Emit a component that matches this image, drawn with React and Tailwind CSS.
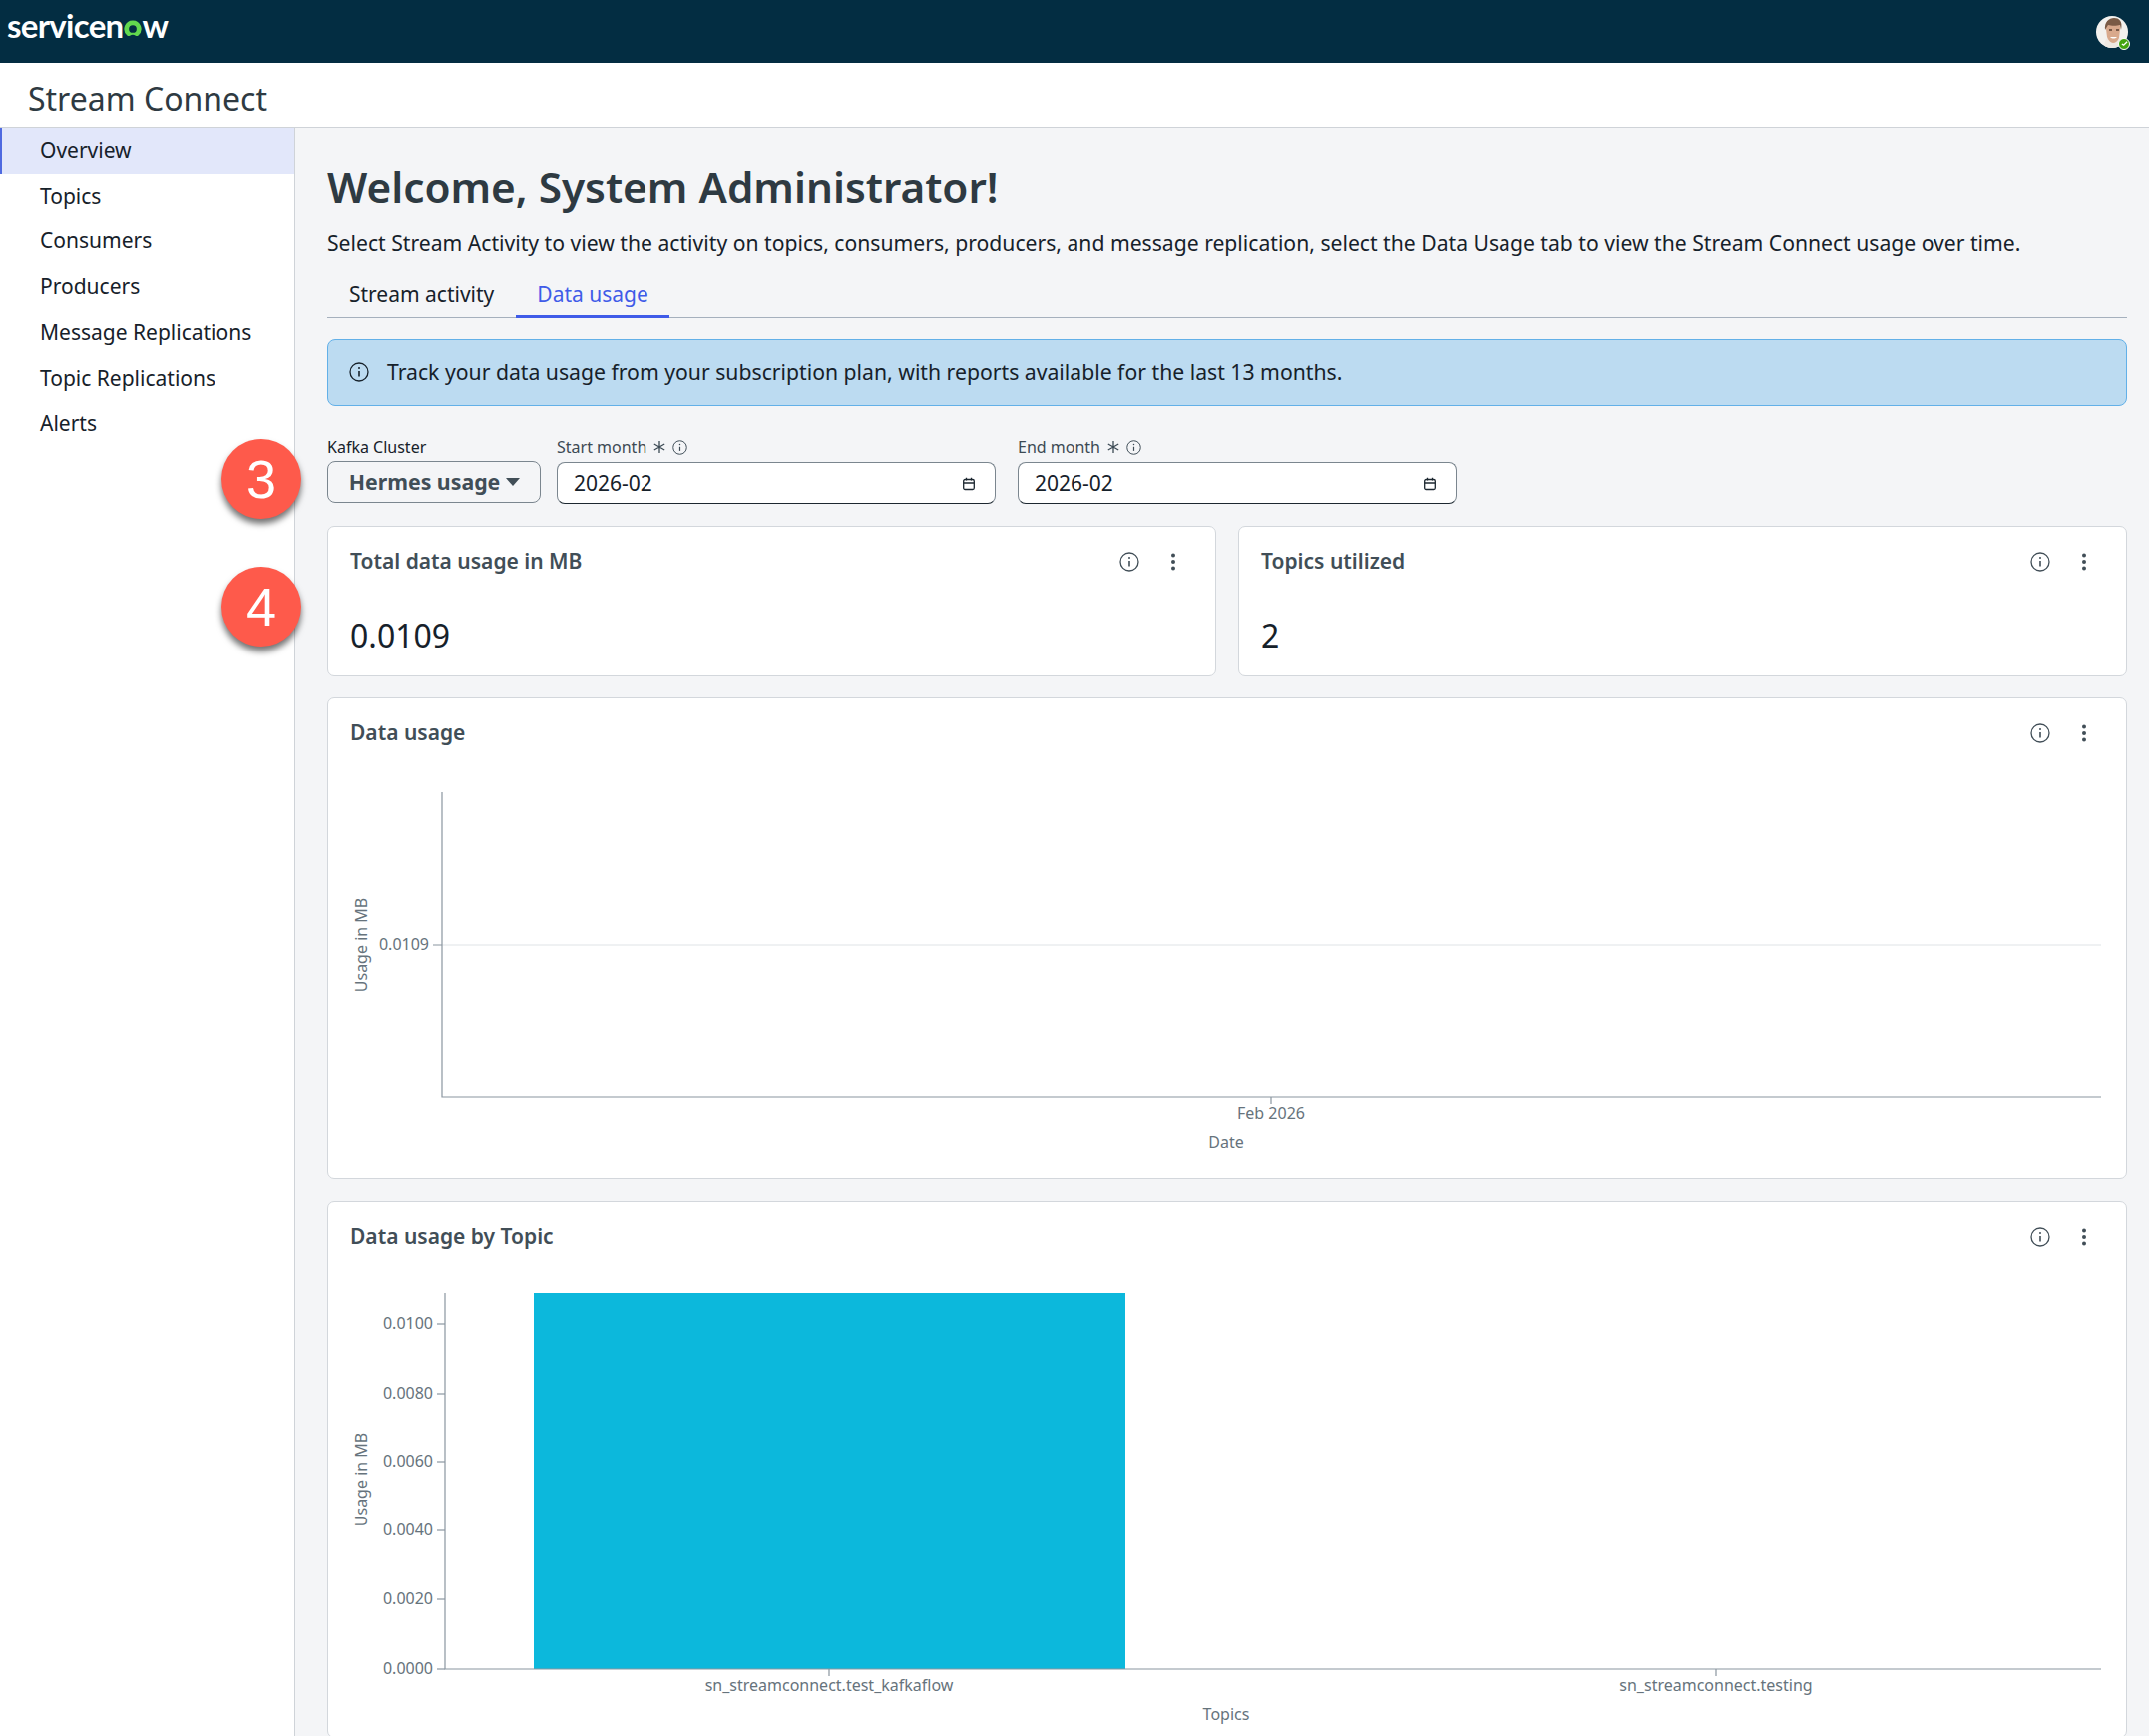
import React from "react";

const NAV_ITEMS = ["Overview", "Topics", "Consumers", "Producers", "Message Replications", "Topic Replications", "Alerts"];
const TOPIC_TICKS = [
  ["0.0100", 41],
  ["0.0080", 111],
  ["0.0060", 179],
  ["0.0040", 248],
  ["0.0020", 317],
  ["0.0000", 387],
];

function InfoIcon({ className = "w-[20px] h-[20px]" }) {
  return (
    <svg viewBox="0 0 20 20" fill="none" stroke="currentColor" className={className}>
      <circle cx="10" cy="10" r="9" strokeWidth="1.3" />
      <path d="M10 9v5.5" strokeWidth="1.6" />
      <circle cx="10" cy="6" r="1" fill="currentColor" stroke="none" />
    </svg>
  );
}

function DotsIcon() {
  return (
    <svg viewBox="0 0 6 18" fill="currentColor" className="w-[6px] h-[18px]">
      <circle cx="3" cy="2.5" r="2" />
      <circle cx="3" cy="9" r="2" />
      <circle cx="3" cy="15.5" r="2" />
    </svg>
  );
}

function RequiredIcon() {
  return (
    <svg viewBox="0 0 14 14" fill="none" stroke="currentColor" strokeWidth="1.3" className="w-[14px] h-[14px]">
      <path d="M7 1v12M1.8 4l10.4 6M1.8 10l10.4-6" />
    </svg>
  );
}

function CalendarIcon() {
  return (
    <svg viewBox="0 0 14 14" fill="none" stroke="currentColor" strokeWidth="1.3" className="w-[14px] h-[14px] text-[#1c2730]">
      <rect x="1.7" y="2.5" width="10.6" height="10" rx="1.5" />
      <path d="M1.7 6h10.6M4.5 .8v2.6M9.5 .8v2.6" />
    </svg>
  );
}

function Avatar() {
  return (
    <div className="relative w-[32px] h-[32px]">
      <svg viewBox="0 0 32 32" className="w-[32px] h-[32px] rounded-full">
        <rect width="32" height="32" fill="#f3f1ee" />
        <path d="M8 32c0-9 4-12 9-12s10 3 10 12z" fill="#efe9e3" />
        <path d="M10 13c0-6 4-8 8-8s7 3 6 9l-1 8c-1 3-4 5-6 5s-5-3-6-6z" fill="#d9a98c" />
        <path d="M9 14C8 6 13 2 18 2s9 3 7 12l-1-5c-3 1-9 1-12 0z" fill="#7a5a45" />
        <path d="M13 14h3M20 14h3" stroke="#5a3f30" strokeWidth="1.3" />
        <path d="M14 21c2 2 5 2 7 0z" fill="#fff" />
      </svg>
      <span className="absolute right-[-2px] bottom-[-2px] w-[12px] h-[12px] rounded-full bg-[#43a410] border border-white flex items-center justify-center">
        <svg viewBox="0 0 8 8" fill="none" stroke="#fff" strokeWidth="1.5" className="w-[7px] h-[7px]">
          <path d="M1 4.5l2 1.5 4-4" />
        </svg>
      </span>
    </div>
  );
}

function Logo() {
  return (
    <div className="flex items-baseline text-white font-['Lato',sans-serif] font-bold text-[33px] leading-none tracking-[-0.7px] ml-[7px] mb-[12px]">
      <span>servicen</span>
      <svg viewBox="0 0 20 20" className="w-[18px] h-[18px] mx-[0.5px]">
        <path d="M10 .5a9.500 9.500 0 0 0-6.200 16.700c1 .8 2.100.8 3 .2a5.600 5.600 0 0 1 6.400 0c.9.6 2 .6 3-.2A9.500 9.500 0 0 0 10 .5zm0 13.800a4.300 4.300 0 1 1 0-8.600 4.300 4.300 0 0 1 0 8.600z" fill="#62d84e" />
      </svg>
      <span>w</span>
    </div>
  );
}

function Badge({ value, className }) {
  return (
    <div className={`absolute left-[222px] w-[80px] h-[80px] pt-[1px] rounded-full bg-[#fe5a4b] text-white flex items-center justify-center font-['Liberation_Sans',sans-serif] text-[54px] shadow-[0_5px_6px_rgba(0,0,0,0.55)] ${className}`}>
      {value}
    </div>
  );
}

function CardHeader({ title }) {
  return (
    <div className="flex items-center justify-between h-[70px] pl-[22px] pr-[39px] text-[#414e57]">
      <h2 className="text-[21px] font-semibold">{title}</h2>
      <div className="flex items-center gap-[31px]">
        <InfoIcon />
        <DotsIcon />
      </div>
    </div>
  );
}

function StatCard({ title, value }) {
  return (
    <div className="flex-1 h-[151px] bg-white border border-[#d3d7dc] rounded-[7px]">
      <CardHeader title={title} />
      <div className="pl-[22px] mt-[17px] text-[32px] leading-[44px] text-[#16212a]">{value}</div>
    </div>
  );
}

function DateField({ label, className }) {
  return (
    <div className={className}>
      <div className="flex items-center gap-[6px] h-[20px] mb-[5px] text-[16px] text-[#3c4a54]">
        <span>{label}</span>
        <RequiredIcon />
        <InfoIcon className="w-[15px] h-[15px]" />
      </div>
      <div className="flex items-center justify-between h-[42px] pl-[16px] pr-[19px] pt-[1px] bg-white rounded-[8px] border border-[#7b868f] border-b-[#1c2730] text-[21px] text-[#16212a]">
        <span>2026-02</span>
        <CalendarIcon />
      </div>
    </div>
  );
}

function UsageChart() {
  return (
    <svg viewBox="0 0 1802 399" className="block w-full h-[399px] text-[16px] font-['Noto_Sans',sans-serif] fill-[#66737c]">
      <path d="M114 166H1777" stroke="#dfe3e6" fill="none" />
      <path d="M114 13V319H1777M105 166H114M945 319V326" stroke="#8a96a0" strokeWidth="1.200" fill="none" />
      <text x="101" y="171" textAnchor="end">0.0109</text>
      <text x="945" y="341" textAnchor="middle">Feb 2026</text>
      <text x="900" y="370" textAnchor="middle">Date</text>
      <text x="39" y="166" textAnchor="middle" transform="rotate(-90 39 166)">Usage in MB</text>
    </svg>
  );
}

function TopicChart() {
  return (
    <svg viewBox="0 0 1802 455" className="block w-full h-[455px] text-[16px] font-['Noto_Sans',sans-serif] fill-[#66737c]">
      <rect x="206" y="10" width="593" height="377" fill="#0cb8dc" />
      <path d="M117 10V387H1777M502 387V394M1391 387V394" stroke="#8a96a0" strokeWidth="1.200" fill="none" />
      {TOPIC_TICKS.map(([label, y]) => (
        <g key={label}>
          <path d={`M109 ${y}H117`} stroke="#8a96a0" strokeWidth="1.200" fill="none" />
          <text x="105" y={y + 5} textAnchor="end">{label}</text>
        </g>
      ))}
      <text x="502" y="409" textAnchor="middle">sn_streamconnect.test_kafkaflow</text>
      <text x="1391" y="409" textAnchor="middle">sn_streamconnect.testing</text>
      <text x="900" y="438" textAnchor="middle">Topics</text>
      <text x="39" y="197" textAnchor="middle" transform="rotate(-90 39 197)">Usage in MB</text>
    </svg>
  );
}

export default function App() {
  return (
    <div className="relative h-[1740px] overflow-hidden bg-white font-['Noto_Sans',sans-serif] text-[#16212a]">
      <header className="flex items-center justify-between h-[63px] pr-[21px] bg-[#032d42]">
        <Logo />
        <Avatar />
      </header>

      <div className="flex items-center h-[65px] pl-[28px] pt-[7px] border-b border-[#cfd3d8] text-[32px] text-[#2e3a42]">Stream Connect</div>

      <div className="flex h-[1612px]">
        <nav className="w-[296px] shrink-0 border-r border-[#cfd3d8] bg-white">
          {NAV_ITEMS.map((item, index) => (
            <div
              key={item}
              className={`flex items-center h-[45.700px] text-[21px] ${index === 0 ? "bg-[#e2e7fa] border-l-[2px] border-[#4f6ae0] pl-[38px] pb-[1px]" : "pl-[40px]"}`}
            >
              {item}
            </div>
          ))}
        </nav>

        <main className="flex-1 min-w-0 bg-[#f4f5f7] pt-[29px] pl-[32px] pr-[22px]">
          <h1 className="text-[42.300px] leading-[60px] font-semibold text-[#2e3a42]">Welcome, System Administrator!</h1>
          <p className="mt-[12px] text-[21.150px] leading-[30px]">
            Select Stream Activity to view the activity on topics, consumers, producers, and message replication, select the Data Usage tab to view the Stream Connect usage over time.
          </p>

          <div className="flex mt-[14px] h-[46px] border-b-[1.500px] border-[#a5b0bd] text-[21px]">
            <div className="px-[22px] pt-[7px]">Stream activity</div>
            <div className="px-[21px] pt-[7px] h-[46px] border-b-[3px] border-[#3f5be8] text-[#3f5be8]">Data usage</div>
          </div>

          <div className="flex items-center gap-[18px] h-[67px] mt-[21px] pl-[21px] pb-[1px] bg-[#bcdbf1] border border-[#62b0e8] rounded-[8px] text-[21.200px]">
            <InfoIcon />
            <span>Track your data usage from your subscription plan, with reports available for the last 13 months.</span>
          </div>

          <div className="flex gap-[16px] mt-[31px]">
            <div className="w-[214px]">
              <div className="h-[20px] mb-[4px] text-[16px] leading-[20px]">Kafka Cluster</div>
              <button type="button" className="flex items-center justify-center gap-[6px] w-full h-[42px] pl-[1px] rounded-[8px] border border-[#7b868f] text-[21.300px] font-bold text-[#414e57]">
                Hermes usage
                <svg viewBox="0 0 14 8" fill="currentColor" className="w-[14px] h-[8px]">
                  <path d="M0 0h14L7 8z" />
                </svg>
              </button>
            </div>
            <DateField label="Start month" className="w-[440px]" />
            <DateField label="End month" className="w-[440px] ml-[6px]" />
          </div>

          <div className="flex gap-[22px] mt-[22px]">
            <StatCard title="Total data usage in MB" value="0.0109" />
            <StatCard title="Topics utilized" value="2" />
          </div>

          <div className="mt-[21px] h-[483px] bg-white border border-[#d3d7dc] rounded-[7px]">
            <CardHeader title="Data usage" />
            <div className="mt-[11px]">
              <UsageChart />
            </div>
          </div>

          <div className="mt-[22px] bg-white border border-[#d3d7dc] rounded-[7px]">
            <CardHeader title="Data usage by Topic" />
            <div className="mt-[11px]">
              <TopicChart />
            </div>
          </div>
        </main>
      </div>

      <Badge value="3" className="top-[440px]" />
      <Badge value="4" className="top-[568px]" />
    </div>
  );
}
